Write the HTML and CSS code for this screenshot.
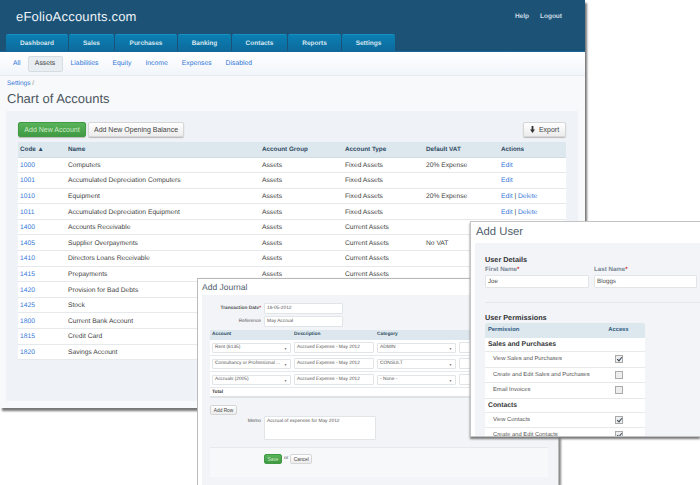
FILE: index.html
```html
<!DOCTYPE html>
<html lang="en">
<head>
  <meta charset="UTF-8">
  <title>Chart of Accounts</title>
  <link rel="stylesheet" href="styles.css">
</head>
<body>

  <!-- main window -->
  <div class="window main-window">
    <div class="header">
      <div class="header-top">
        <div class="logo">eFolioAccounts.com</div>
        <div class="header-links"><a>Help</a><a>Logout</a></div>
      </div>
      <div class="tabs">
        <a class="tab tab-dashboard">Dashboard</a>
        <a class="tab tab-sales">Sales</a>
        <a class="tab tab-purchases">Purchases</a>
        <a class="tab tab-banking">Banking</a>
        <a class="tab tab-contacts">Contacts</a>
        <a class="tab tab-reports">Reports</a>
        <a class="tab tab-settings">Settings</a>
      </div>
    </div>

    <div class="subnav">
      <a>All</a>
      <a class="active">Assets</a>
      <a>Liabilities</a>
      <a>Equity</a>
      <a>Income</a>
      <a>Expenses</a>
      <a>Disabled</a>
    </div>

    <div class="page-title">
      <div class="breadcrumb"><a>Settings</a> /</div>
      <h1>Chart of Accounts</h1>
    </div>

    <div class="panel">
      <div class="toolbar">
        <button class="btn btn-green btn-account">Add New Account</button>
        <button class="btn btn-balance">Add New Opening Balance</button>
        <button class="btn btn-export">
          <svg width="5" height="7" viewBox="0 0 5 7"><path d="M1.6 0h1.8v3.6H5L2.5 7 0 3.6h1.6z" fill="#333"/></svg>
          Export
        </button>
      </div>
      <table class="accounts">
        <thead>
          <tr><th class="c-code">Code ▲</th><th class="c-name">Name</th><th class="c-group">Account Group</th><th class="c-type">Account Type</th><th class="c-vat">Default VAT</th><th>Actions</th></tr>
        </thead>
        <tbody>
          <tr><td><a>1000</a></td><td>Computers</td><td>Assets</td><td>Fixed Assets</td><td>20% Expense</td><td><a>Edit</a></td></tr>
          <tr><td><a>1001</a></td><td>Accumulated Depreciation Computers</td><td>Assets</td><td>Fixed Assets</td><td></td><td><a>Edit</a></td></tr>
          <tr><td><a>1010</a></td><td>Equipment</td><td>Assets</td><td>Fixed Assets</td><td>20% Expense</td><td><a>Edit</a> | <a>Delete</a></td></tr>
          <tr><td><a>1011</a></td><td>Accumulated Depreciation Equipment</td><td>Assets</td><td>Fixed Assets</td><td></td><td><a>Edit</a> | <a>Delete</a></td></tr>
          <tr><td><a>1400</a></td><td>Accounts Receivable</td><td>Assets</td><td>Current Assets</td><td></td><td></td></tr>
          <tr><td><a>1405</a></td><td>Supplier Overpayments</td><td>Assets</td><td>Current Assets</td><td>No VAT</td><td></td></tr>
          <tr><td><a>1410</a></td><td>Directors Loans Receivable</td><td>Assets</td><td>Current Assets</td><td></td><td></td></tr>
          <tr><td><a>1415</a></td><td>Prepayments</td><td>Assets</td><td>Current Assets</td><td></td><td></td></tr>
          <tr><td><a>1420</a></td><td>Provision for Bad Debts</td><td></td><td></td><td></td><td></td></tr>
          <tr><td><a>1425</a></td><td>Stock</td><td></td><td></td><td></td><td></td></tr>
          <tr><td><a>1800</a></td><td>Current Bank Account</td><td></td><td></td><td></td><td></td></tr>
          <tr><td><a>1815</a></td><td>Credit Card</td><td></td><td></td><td></td><td></td></tr>
          <tr><td><a>1820</a></td><td>Savings Account</td><td></td><td></td><td></td><td></td></tr>
        </tbody>
      </table>
    </div>
  </div>

  <!-- add journal window -->
  <div class="window journal-window">
    <div class="win-title journal-title">Add Journal</div>
    <div class="journal-body">
      <div class="j-field j-date"><label>Transaction Date<span class="req">*</span></label><div class="input j-short">16-05-2012</div></div>
      <div class="j-field j-ref"><label>Reference</label><div class="input j-short">May Accrual</div></div>

      <div class="j-head"><span class="j-c1">Account</span><span class="j-c2">Description</span><span>Category</span></div>
      <div class="j-row">
        <div class="select j-c1-box">Rent (6135)<i>▼</i></div>
        <div class="input j-desc">Accrued Expense - May 2012</div>
        <div class="select j-cat">ADMIN<i>▼</i></div>
        <div class="input j-amount"></div>
      </div>
      <div class="j-row">
        <div class="select j-c1-box">Consultancy or Professional ...<i>▼</i></div>
        <div class="input j-desc">Accrued Expense - May 2012</div>
        <div class="select j-cat">CONSULT<i>▼</i></div>
        <div class="input j-amount"></div>
      </div>
      <div class="j-row">
        <div class="select j-c1-box">Accruals (2005)<i>▼</i></div>
        <div class="input j-desc">Accrued Expense - May 2012</div>
        <div class="select j-cat">- None -<i>▼</i></div>
        <div class="input j-amount"></div>
      </div>
      <div class="j-total">Total</div>

      <button class="btn btn-small j-addrow">Add Row</button>
      <div class="j-field j-memo"><label>Memo</label><div class="input memo-box">Accrual of expenses for May 2012</div></div>
      <div class="j-actions">
        <button class="btn btn-green btn-small j-save">Save</button>
        <span>or</span>
        <button class="btn btn-small j-cancel">Cancel</button>
      </div>
    </div>
  </div>

  <!-- add user window -->
  <div class="window user-window">
    <div class="win-title user-title">Add User</div>
    <div class="user-body">
      <h3>User Details</h3>
      <div class="name-row">
        <div><label>First Name<span class="req">*</span></label><div class="input name-box">Joe</div></div>
        <div><label>Last Name<span class="req">*</span></label><div class="input name-box">Bloggs</div></div>
      </div>
      <div class="divider"></div>
      <h3>User Permissions</h3>
      <div class="perm-table">
        <div class="perm-head"><span>Permission</span><span class="perm-access">Access</span></div>
        <div class="perm-group">Sales and Purchases</div>
        <div class="perm-row"><span>View Sales and Purchases</span><span class="check on"></span></div>
        <div class="perm-row"><span>Create and Edit Sales and Purchases</span><span class="check"></span></div>
        <div class="perm-row"><span>Email Invoices</span><span class="check"></span></div>
        <div class="perm-group">Contacts</div>
        <div class="perm-row"><span>View Contacts</span><span class="check on"></span></div>
        <div class="perm-row"><span>Create and Edit Contacts</span><span class="check on"></span></div>
      </div>
    </div>
  </div>

</body>
</html>
```

FILE: styles.css
```css
* {
  box-sizing: border-box;
}

html, body {
  height: 100%;
}

body {
  margin: 0;
  background-color: #fff;
  font-family: "Liberation Sans", Arial, sans-serif;
  font-size: 7px;
  color: #444;
  overflow: hidden;
  position: relative;
  text-rendering: geometricPrecision;
}

a {
  color: #3278d8;
}

.window {
  position: absolute;
  overflow: hidden;
}

.main-window {
  left: 0;
  top: 0;
  width: 585px;
  height: 408px;
  overflow: visible;
  background-color: #f8f9fa;
  box-shadow: 2px 3px 2px #777;
}

.header {
  height: 52px;
  background-color: #1b5276;
  border-bottom: 1px solid #16689a;
}

.header-top {
  height: 34px;
  display: flex;
  justify-content: space-between;
  padding: 0 23px 0 16px;
}

.logo {
  font-size: 13px;
  color: #eef3f6;
  line-height: 33px;
  letter-spacing: 0.2px;
}

.header-links {
  display: flex;
  gap: 11px;
  padding-top: 13px;
  font-size: 6.5px;
  font-weight: bold;
}

.header-links a {
  color: #cfdde6;
}

.tabs {
  display: flex;
  gap: 1px;
  padding-left: 6px;
}

.tab {
  height: 17px;
  line-height: 18px;
  text-align: center;
  font-size: 6.5px;
  font-weight: bold;
  color: #d6e6ef;
  background: linear-gradient(#0a7fb3, #0e6a9c);
  border-top: 1px solid #1790c2;
  border-radius: 2px 2px 0 0;
}

.tab-dashboard { width: 62px; }
.tab-sales { width: 45px; }
.tab-purchases { width: 62px; }
.tab-banking { width: 53px; }
.tab-contacts { width: 55px; }
.tab-reports { width: 53px; }
.tab-settings { width: 53px; }

.subnav {
  height: 24px;
  display: flex;
  align-items: center;
  padding-left: 13px;
  background: linear-gradient(#fff, #f1f5fb);
  border-bottom: 1px solid #e6ebf1;
  font-size: 6.8px;
}

.subnav a {
  margin-right: 14px;
}

.subnav .active {
  margin: 0 8px 0 -7px;
  width: 35px;
  height: 16px;
  line-height: 14px;
  text-align: center;
  color: #444;
  background-color: #e9eef2;
  border: 1px solid #d5dde3;
  border-radius: 2px;
}

.page-title {
  height: 35px;
  padding: 4px 7px 0;
}

.breadcrumb {
  font-size: 6.5px;
  color: #888;
}

h1 {
  margin: 4px 0 0;
  font-size: 13px;
  font-weight: normal;
  color: #4a5560;
}

.panel {
  margin: 0 7px 0 6px;
  height: 290px;
  padding: 11px 12px;
  background-color: #eff2f6;
}

.toolbar {
  display: flex;
  gap: 2px;
  height: 15px;
  margin-bottom: 5px;
}

.btn {
  font-family: inherit;
  font-size: 7px;
  height: 15px;
  padding: 0;
  color: #444;
  background: linear-gradient(#fff, #ececec);
  border: 1px solid #d6d6d6;
  border-radius: 2px;
  box-shadow: 0 1px 1px #bbb;
}

.btn-green {
  color: #cfe8c8;
  background: linear-gradient(#58b35a, #3f9a43);
  border-color: #3f9a43;
}

.btn-account { width: 68px; }
.btn-balance { width: 96px; }

.btn-export {
  margin-left: auto;
  width: 43px;
  display: flex;
  align-items: center;
  justify-content: center;
  gap: 4px;
}

.accounts {
  width: 100%;
  border-collapse: collapse;
  table-layout: fixed;
}

.accounts th {
  height: 15px;
  padding: 0 2px;
  text-align: left;
  font-size: 6.3px;
  color: #2f4a63;
  background-color: #dde8ee;
  border-bottom: 1px solid #cfdce3;
}

.accounts td {
  height: 15.6px;
  padding: 1px 2px 0;
  background-color: #fff;
  border-bottom: 1px solid #e6e9ec;
  white-space: nowrap;
  font-size: 6.7px;
  color: #3f3f3f;
}

.c-code { width: 48px; }
.c-name { width: 194px; }
.c-group { width: 83px; }
.c-type { width: 81px; }
.c-vat { width: 75px; }

.win-title {
  color: #50606c;
}

/* journal window */
.journal-window {
  left: 197px;
  top: 278px;
  width: 362px;
  height: 207px;
  overflow: visible;
  background-color: #fff;
  border: 1px solid #bbb;
  border-bottom: none;
  box-shadow: 2px 1px 2px #888;
}

.journal-title {
  height: 16px;
  padding-left: 4px;
  font-size: 8.5px;
  line-height: 17px;
}

.journal-body {
  height: 190px;
  margin-left: 4px;
  padding: 8px 0 0 8px;
  background-color: #f2f4f8;
  font-size: 4.8px;
  overflow: hidden;
}

.input, .select {
  background-color: #fff;
  border: 1px solid #e2e5e8;
  border-radius: 1px;
  color: #555;
  white-space: nowrap;
  overflow: hidden;
}

.j-field {
  display: flex;
  align-items: center;
}

.j-field label {
  width: 51px;
  margin-right: 3px;
  text-align: right;
  font-size: 4.8px;
  color: #555;
}

.j-date {
  height: 10px;
  margin-bottom: 3px;
}

.j-date label {
  font-weight: bold;
}

.j-ref {
  height: 11px;
  margin-bottom: 3px;
}

.req {
  color: #c33;
}

.j-short {
  width: 79px;
  height: 11px;
  line-height: 9px;
  padding-left: 2px;
}

.j-head {
  display: flex;
  height: 10px;
  width: 360px;
  line-height: 10px;
  font-weight: bold;
  color: #2f4a63;
  background-color: #dde8ee;
}

.j-c1 { width: 84px; padding-left: 2px; }
.j-c2 { width: 83px; }

.j-row {
  display: flex;
  align-items: center;
  gap: 3px;
  height: 16px;
  width: 360px;
  padding-left: 2px;
  background-color: #fff;
  border-bottom: 1px solid #e6e9ec;
}

.select {
  position: relative;
  height: 10px;
  line-height: 8px;
  padding-left: 2px;
}

.select i {
  position: absolute;
  right: 3px;
  top: 1px;
  font-style: normal;
  font-size: 3px;
}

.j-c1-box { width: 79px; }
.j-desc { width: 80px; height: 11px; line-height: 9px; padding-left: 2px; }
.j-cat { width: 79px; }
.j-amount { width: 30px; height: 11px; }

.j-total {
  width: 360px;
  height: 10px;
  line-height: 9px;
  padding-left: 2px;
  font-weight: bold;
  background-color: #fff;
  border-bottom: 2px solid #e0e3e6;
}

.btn-small {
  font-size: 4.8px;
  height: 10px;
  box-shadow: none;
}

.j-addrow {
  display: block;
  margin: 7px 0 1px;
  width: 27px;
}

.j-memo {
  align-items: flex-start;
  margin-bottom: 7px;
}

.j-memo label {
  padding-top: 3px;
}

.memo-box {
  width: 112px;
  height: 24px;
  padding: 2px;
}

.j-actions {
  display: flex;
  gap: 2px;
  width: 338px;
  height: 30px;
  padding: 6px 0 0 54px;
  align-items: flex-start;
  background-color: #f7f8fa;
  border-top: 1px solid #e6e9ec;
}

.j-actions span {
  line-height: 9px;
}

.j-save { width: 18px; }
.j-cancel { width: 22px; }

/* user window */
.user-window {
  left: 470px;
  top: 221px;
  width: 230px;
  height: 216px;
  overflow: visible;
  background-color: #fff;
  border: 1px solid #c4c4c4;
  border-right: none;
  box-shadow: 0 2px 2px #777;
}

.user-title {
  height: 21px;
  padding-left: 5px;
  font-size: 11.3px;
  line-height: 21px;
}

.user-body {
  height: 193px;
  margin-left: 4px;
  padding: 12px 0 0 10px;
  background-color: #f2f4f8;
  color: #555;
  overflow: hidden;
}

h3 {
  margin: 0;
  font-size: 7.3px;
  line-height: 9px;
  color: #333;
}

.name-row {
  display: flex;
  gap: 5px;
  margin-top: 2px;
}

.name-row label {
  display: block;
  height: 9px;
  line-height: 8px;
  font-size: 6.2px;
  font-weight: bold;
  color: #7a8794;
}

.name-box {
  width: 104px;
  height: 13px;
  line-height: 11px;
  padding-left: 2px;
  font-size: 6.2px;
}

.name-row > div + div .name-box {
  width: 103px;
}

.divider {
  height: 1px;
  margin: 14px 0 10px;
  background-color: #e4e8ec;
}

.perm-table {
  width: 160px;
  margin-top: 1px;
  background-color: #fff;
  font-size: 5.8px;
}

.perm-head {
  display: flex;
  height: 15px;
  line-height: 15px;
  padding-left: 3px;
  font-weight: bold;
  color: #2f5a80;
  background-color: #dde8ee;
  border-radius: 2px 2px 0 0;
}

.perm-access {
  margin-left: 89px;
}

.perm-group {
  height: 14px;
  line-height: 13px;
  padding-left: 3px;
  font-size: 6.8px;
  font-weight: bold;
  color: #333;
  border-bottom: 1px solid #e6e9ec;
}

.perm-row {
  display: flex;
  justify-content: space-between;
  align-items: center;
  height: 15.5px;
  padding: 0 22px 0 8px;
  border-bottom: 1px solid #e6e9ec;
  white-space: nowrap;
}

.check {
  width: 8px;
  height: 8px;
  background-color: #eee;
  border: 1px solid #aaa;
  flex: none;
}

.check.on {
  position: relative;
}

.check.on::after {
  content: "";
  position: absolute;
  left: 2px;
  top: 0;
  width: 2px;
  height: 4px;
  border: solid #345;
  border-width: 0 1px 1px 0;
  transform: rotate(40deg);
}
```
